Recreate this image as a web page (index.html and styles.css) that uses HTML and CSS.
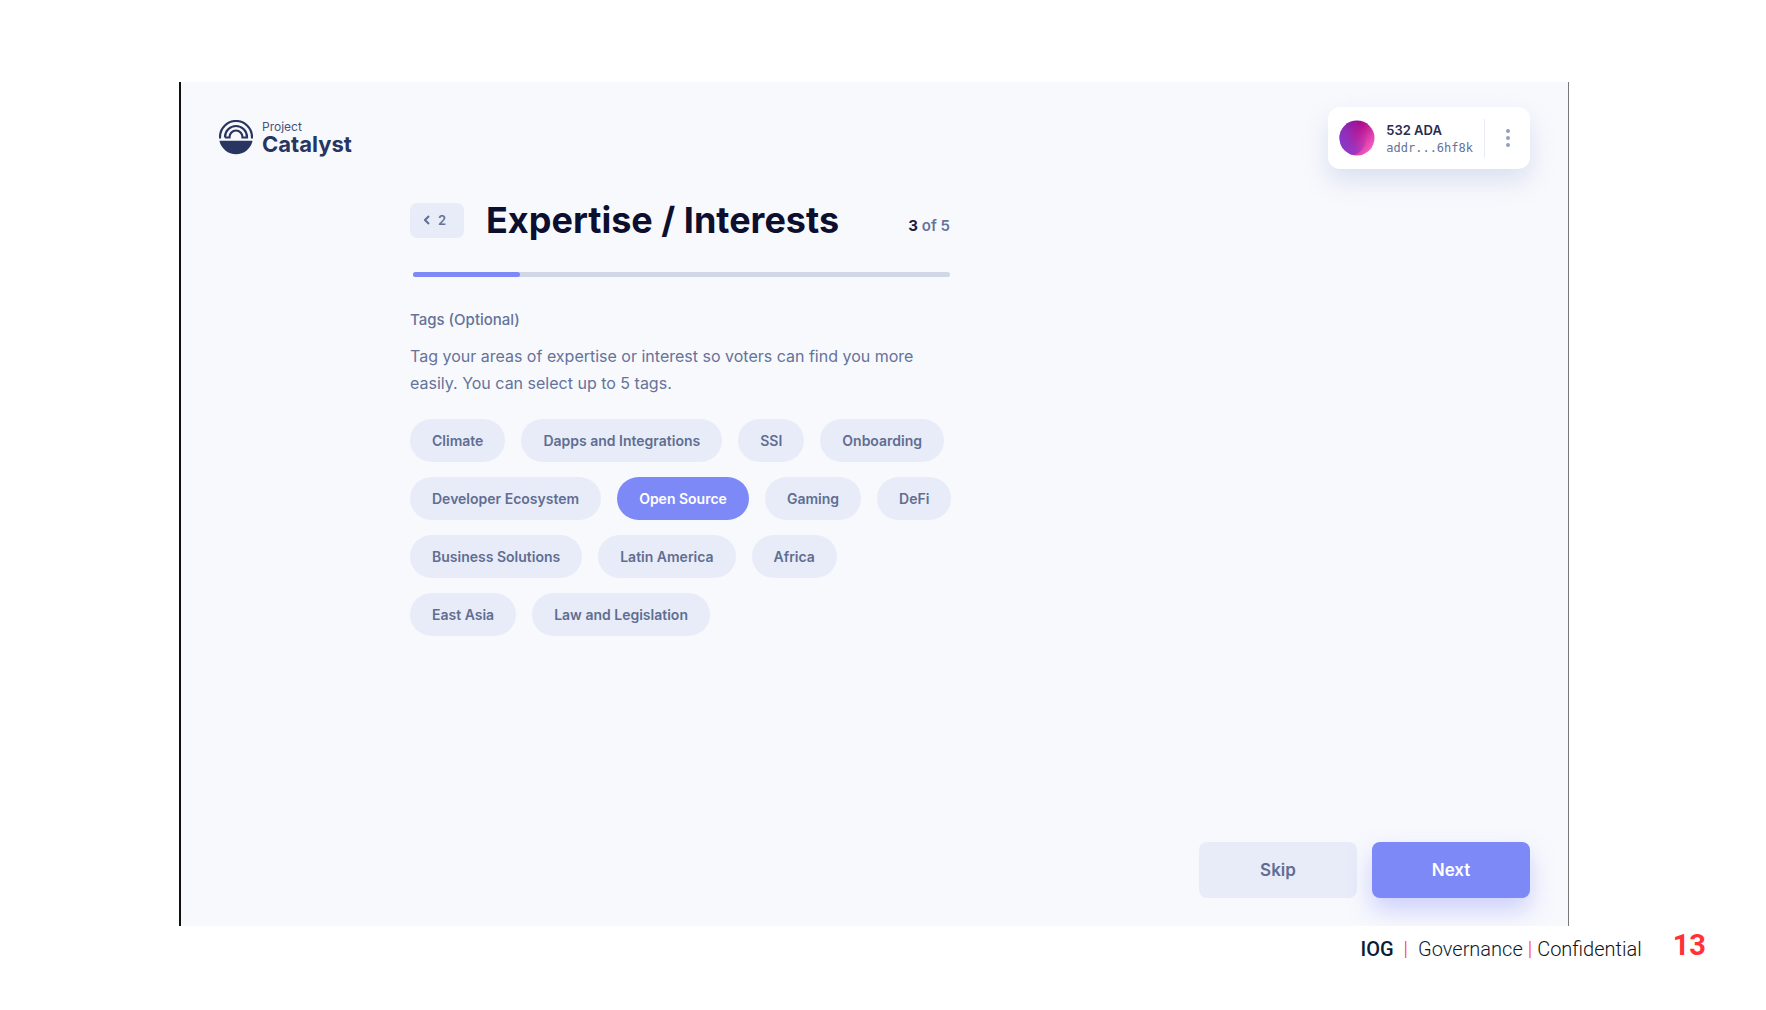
FILE: index.html
```html
<!DOCTYPE html>
<html lang="en">
<head>
<meta charset="utf-8">
<meta name="viewport" content="width=device-width, initial-scale=1">
<title>Project Catalyst – Expertise / Interests</title>
<link rel="stylesheet" href="styles.css">
</head>
<body>
<div class="slide">
  <div class="screen">
    <header class="topbar">
      <a class="logo" href="#">
        <svg class="logo-mark" viewBox="1 1 34 35" width="34" height="35" aria-hidden="true">
          <g fill="none" stroke="#283561" stroke-width="2.200">
            <path d="M2 19.500V18A16 16 0 0 1 34 18V19.500"/>
            <path d="M7 18.500V18A11 11 0 0 1 29 18V18.500H24.500V18A6.500 6.500 0 0 0 11.500 18V18.500H7"/>
          </g>
          <path d="M1.400 21.800H34.600A17 17 0 0 1 1.400 21.800Z" fill="#283561"/>
        </svg>
        <span class="logo-text"><span class="logo-small">Project</span><span class="logo-large">Catalyst</span></span>
      </a>
      <div class="wallet">
        <svg class="avatar" viewBox="0 0 36 36" width="36" height="36" aria-hidden="true">
          <defs>
            <linearGradient id="ring" x1="0" y1="0.1" x2="0.9" y2="0.8">
              <stop offset="0" stop-color="#5b0fa0"/><stop offset="0.5" stop-color="#b8128f"/><stop offset="1" stop-color="#f65cc0"/>
            </linearGradient>
            <linearGradient id="disc" x1="0" y1="0.8" x2="0.9" y2="0.3">
              <stop offset="0" stop-color="#7048e8"/><stop offset="0.6" stop-color="#9434c0" stop-opacity="0.8"/><stop offset="1" stop-color="#b02cae" stop-opacity="0.15"/>
            </linearGradient>
            <clipPath id="round"><circle cx="18" cy="18" r="17.500"/></clipPath>
          </defs>
          <circle cx="18" cy="18" r="17.500" fill="url(#ring)"/>
          <circle cx="9" cy="18" r="18" fill="url(#disc)" clip-path="url(#round)"/>
        </svg>
        <div class="wallet-info">
          <span class="balance">532 ADA</span>
          <span class="address">addr...6hf8k</span>
        </div>
        <button class="menu" type="button" aria-label="Wallet menu">
          <svg viewBox="0 0 4 18" width="4" height="18" fill="#94a0ba" aria-hidden="true"><circle cx="2" cy="2" r="2"/><circle cx="2" cy="9" r="2"/><circle cx="2" cy="16" r="2"/></svg>
        </button>
      </div>
    </header>

    <main class="step">
      <div class="step-head">
        <button class="back" type="button" aria-label="Back to step 2">
          <svg viewBox="0 0 6 10" width="6" height="10" fill="none" stroke="#5f6e92" stroke-width="2" aria-hidden="true"><path d="M5 1L1 5L5 9"/></svg>
          2
        </button>
        <h1 class="title">Expertise / Interests</h1>
        <p class="count"><strong>3</strong> of 5</p>
      </div>
      <div class="progress" role="progressbar" aria-label="Progress" aria-valuemin="0" aria-valuemax="5" aria-valuenow="1"><div class="progress-fill" style="width:20%"></div></div>

      <h2 class="label" id="tags-label">Tags (Optional)</h2>
      <p class="help">Tag your areas of expertise or interest so voters can find you more easily. You can select up to 5 tags.</p>
      <div class="tags" role="group" aria-labelledby="tags-label">
        <button class="tag" type="button">Climate</button>
        <button class="tag" type="button">Dapps and Integrations</button>
        <button class="tag" type="button">SSI</button>
        <button class="tag" type="button">Onboarding</button>
        <button class="tag" type="button">Developer Ecosystem</button>
        <button class="tag selected" type="button" aria-pressed="true">Open Source</button>
        <button class="tag" type="button">Gaming</button>
        <button class="tag" type="button">DeFi</button>
        <button class="tag" type="button">Business Solutions</button>
        <button class="tag" type="button">Latin America</button>
        <button class="tag" type="button">Africa</button>
        <button class="tag" type="button">East Asia</button>
        <button class="tag" type="button">Law and Legislation</button>
      </div>
    </main>

    <div class="actions">
      <button class="action" type="button">Skip</button>
      <button class="action primary" type="button">Next</button>
    </div>
  </div>

  <footer class="slide-footer">
    <p class="credits"><b class="org">IOG</b><span class="bar">|</span><span class="dept">Governance</span><span class="bar tight">|</span><span>Confidential</span></p>
    <span class="page-number">13</span>
  </footer>
</div>
</body>
</html>
```
FILE: styles.css
```css
* { box-sizing: border-box; }

body {
  margin: 0;
  background: #fff;
  font-family: Inter, "Liberation Sans", sans-serif;
  color: #64739a;
}

h1, h2, p { margin: 0; }

button {
  border: 0;
  padding: 0;
  font: inherit;
  color: inherit;
  background: none;
  cursor: pointer;
}

svg { display: block; flex: none; }

.slide {
  display: flex;
  flex-direction: column;
  min-height: 100vh;
  padding-top: 82px;
}

.screen {
  flex: 1;
  display: flex;
  flex-direction: column;
  margin: 0 197px 0 179px;
  padding: 25px 38px 28px;
  border-left: 2px solid #111;
  border-right: 1px solid #77797d;
  background: #f8f9fd;
  overflow: hidden;
}

.topbar {
  display: flex;
  justify-content: space-between;
  align-items: center;
}

.logo {
  display: flex;
  align-items: center;
  gap: 9px;
  padding-bottom: 2px;
  color: #283561;
  text-decoration: none;
}

.logo-text { display: flex; flex-direction: column; }
.logo-small { font-size: 12px; line-height: 14px; color: #46527a; }
.logo-large { font-size: 22px; font-weight: 700; line-height: 20px; }

.wallet {
  display: flex;
  align-items: center;
  height: 62px;
  padding-left: 11px;
  border-radius: 12px;
  background: #fff;
  box-shadow: 0 12px 24px rgba(150, 170, 210, 0.3);
}

.wallet-info {
  display: flex;
  flex-direction: column;
  margin: 0 11px;
  padding-top: 2px;
}

.balance {
  font-size: 13px;
  font-weight: 600;
  line-height: 18px;
  color: #2a2b50;
}

.address {
  font-family: "DejaVu Sans Mono", monospace;
  font-size: 12px;
  line-height: 18px;
}

.menu {
  display: flex;
  justify-content: center;
  align-items: center;
  width: 46px;
  height: 39px;
  border-left: 1px solid #e9ecf6;
}

.step {
  width: 540px;
  margin: 29px 0 28px 191px;
}

.step-head {
  display: flex;
  align-items: center;
}

.back {
  display: flex;
  align-items: center;
  gap: 8px;
  width: 54px;
  height: 35px;
  padding-left: 14px;
  border-radius: 7px;
  background: #e8ecf8;
  font-size: 13px;
  font-weight: 600;
}

.title {
  margin-left: 22px;
  font-size: 36px;
  font-weight: 700;
  line-height: 44px;
  color: #0d0f2f;
}

.count {
  margin: 12px 0 0 auto;
  font-size: 15px;
  font-weight: 600;
  line-height: 20px;
}

.count strong { font-weight: 700; color: #1b1c42; }

.progress {
  height: 5px;
  margin: 30px 0 0 3px;
  border-radius: 3px;
  background: #d2d7e8;
}

.progress-fill {
  height: 100%;
  border-radius: 3px;
  background: #7d89f7;
}

.label {
  margin-top: 33px;
  font-size: 15px;
  font-weight: 500;
  line-height: 20px;
}

.help {
  margin-top: 13px;
  font-size: 16px;
  line-height: 27px;
}

.tags {
  display: flex;
  flex-wrap: wrap;
  gap: 15px 16px;
  width: 548px;
  margin-top: 22px;
}

.tag {
  height: 43px;
  padding: 0 22px;
  border-radius: 22px;
  background: #e8ecf8;
  font-size: 14px;
  font-weight: 600;
  color: #5f6e92;
}

.tag.selected { background: #7d89f7; color: #fff; }

.actions {
  display: flex;
  justify-content: flex-end;
  gap: 15px;
  margin-top: auto;
}

.action {
  width: 158px;
  height: 56px;
  border-radius: 8px;
  background: #e8ecf8;
  font-size: 17px;
  font-weight: 600;
  color: #5f6e92;
}

.action.primary {
  background: #7d89f7;
  color: #fff;
  box-shadow: 0 12px 24px rgba(125, 137, 247, 0.36);
}

.slide-footer {
  display: flex;
  align-items: flex-start;
  justify-content: flex-end;
  gap: 31px;
  height: 84px;
  padding: 4px 60px 0 0;
  font-family: Roboto, "Liberation Sans", sans-serif;
}

.credits {
  display: flex;
  margin-top: 6px;
  font-size: 20px;
  font-weight: 300;
  line-height: 26px;
  color: #111;
}

.org { font-weight: 500; color: #0b1c33; }
.bar { margin: 0 10px; color: #ff3333; }
.bar.tight { margin: 0 5px; }
.dept { color: #0b1c33; }

.page-number {
  font-size: 29px;
  font-weight: 700;
  line-height: 30px;
  color: #ff3333;
}
```
